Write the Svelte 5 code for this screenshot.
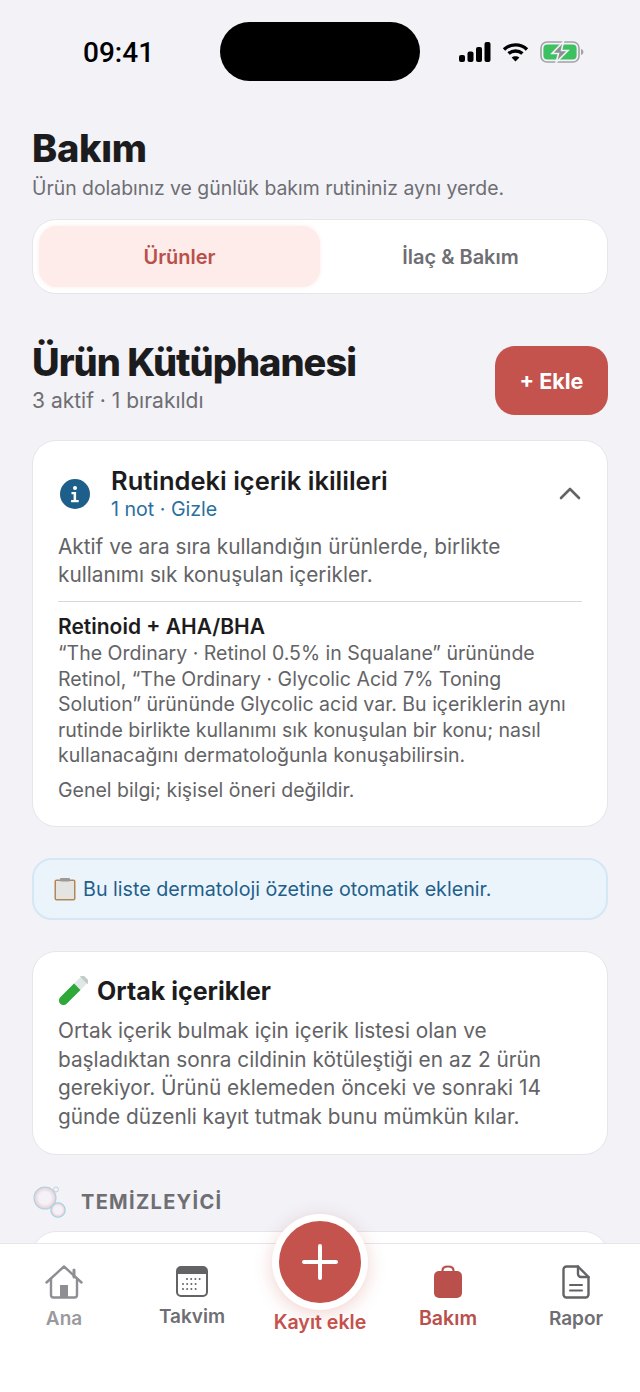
<script>
  const navItems = [
    { id: "home", label: "Ana" },
    { id: "calendar", label: "Takvim" },
    { id: "add", label: "Kayıt ekle" },
    { id: "care", label: "Bakım" },
    { id: "report", label: "Rapor" }
  ];
  const dots = [0, 1, 2, 3];
</script>

<div class="page">
  <div class="status-bar">
    <span class="clock">09:41</span>
    <div class="island"></div>
    <div class="status-icons">
      <svg width="32" height="20" viewBox="0 0 32 20" fill="#000">
        <rect x="0" y="13" width="6" height="7" rx="2" />
        <rect x="8.5" y="9.5" width="6" height="10.5" rx="2" />
        <rect x="17" y="5" width="6" height="15" rx="2" />
        <rect x="25.5" y="0" width="6" height="20" rx="2" />
      </svg>
      <svg width="27" height="20" viewBox="0 0 27 20" fill="none" stroke="#000" stroke-width="3.4">
        <path d="M2 7.4C8.4 1.4 18.6 1.4 25 7.4" />
        <path d="M6.6 11.6C10.4 8.2 16.6 8.2 20.4 11.6" />
        <path d="M13.5 19.6L9.6 15.4C11.6 13.8 15.4 13.8 17.4 15.4Z" fill="#000" stroke="none" />
      </svg>
      <svg width="44" height="22" viewBox="0 0 44 22">
        <rect x="1" y="1" width="38" height="20" rx="6" fill="none" stroke="#a3a3a6" stroke-width="1.6" />
        <rect x="3.4" y="3.4" width="33.2" height="15.2" rx="4" fill="#3cc061" />
        <path d="M41 8v6c1.6-.4 2.4-1.6 2.4-3s-.8-2.6-2.4-3z" fill="#a3a3a6" />
        <path d="M23.5 0.5L12 12.5h6.5L16 21.5 28 9.5h-6.5z" fill="#8e8e93" stroke="#f2f2f7" stroke-width="1.6" />
      </svg>
    </div>
  </div>

  <main class="content">
    <h1>Bakım</h1>
    <p class="subtitle">Ürün dolabınız ve günlük bakım rutininiz aynı yerde.</p>

    <div class="segments">
      <button class="segment active">Ürünler</button>
      <button class="segment">İlaç &amp; Bakım</button>
    </div>

    <div class="library-head">
      <div>
        <h2>Ürün Kütüphanesi</h2>
        <p class="counts">3 aktif · 1 bırakıldı</p>
      </div>
      <button class="add-btn">+ Ekle</button>
    </div>

    <section class="card pairs">
      <div class="pairs-head">
        <svg class="info" width="30" height="30" viewBox="0 0 30 30">
          <circle cx="15" cy="15" r="15" fill="#1d5f8a" />
          <circle cx="15" cy="9" r="2" fill="#fff" />
          <path d="M11.5 13h4.6v8h2.6v2.2h-7.6V21h2.5v-5.8h-2.1z" fill="#fff" />
        </svg>
        <div class="pairs-titles">
          <h3>Rutindeki içerik ikilileri</h3>
          <span class="pairs-toggle">1 not · Gizle</span>
        </div>
        <svg class="chevron" width="22" height="13" viewBox="0 0 22 13" fill="none" stroke="#636366" stroke-width="2.6" stroke-linecap="round" stroke-linejoin="round">
          <path d="M2 11L11 2l9 9" />
        </svg>
      </div>
      <p class="lead">Aktif ve ara sıra kullandığın ürünlerde, birlikte kullanımı sık konuşulan içerikler.</p>
      <hr />
      <h4>Retinoid + AHA/BHA</h4>
      <p class="detail">“The Ordinary · Retinol 0.5% in Squalane” ürününde Retinol, “The Ordinary · Glycolic Acid 7% Toning Solution” ürününde Glycolic acid var. Bu içeriklerin aynı rutinde birlikte kullanımı sık konuşulan bir konu; nasıl kullanacağını dermatoloğunla konuşabilirsin.</p>
      <p class="disclaimer">Genel bilgi; kişisel öneri değildir.</p>
    </section>

    <div class="notice">
      <svg width="22" height="23" viewBox="0 0 22 23">
        <rect x="0.500" y="1.500" width="21" height="21" rx="2" fill="#b5855a" />
        <rect x="2" y="3" width="18" height="18" fill="#e4e4e2" />
        <rect x="6" y="0" width="10" height="3.500" rx="1" fill="#9a9a9c" />
      </svg>
      <span>Bu liste dermatoloji özetine otomatik eklenir.</span>
    </div>

    <section class="card shared">
      <div class="shared-title">
        <svg width="30" height="30" viewBox="0 0 30 30">
          <g transform="rotate(45 15 15)">
            <rect x="10.500" y="-3" width="9" height="36" rx="4.500" fill="#dfe8e6" />
            <path d="M10.500 9h9v19.500a4.500 4.500 0 0 1-9 0z" fill="#2fa83a" />
            <rect x="9.500" y="-3.500" width="11" height="3.500" rx="1.500" fill="#c3cccb" />
          </g>
        </svg>
        <h3>Ortak içerikler</h3>
      </div>
      <p class="lead">Ortak içerik bulmak için içerik listesi olan ve başladıktan sonra cildinin kötüleştiği en az 2 ürün gerekiyor. Ürünü eklemeden önceki ve sonraki 14 günde düzenli kayıt tutmak bunu mümkün kılar.</p>
    </section>

    <div class="category">
      <svg width="34" height="32" viewBox="0 0 34 32" fill="none">
        <defs>
          <radialGradient id="bubble">
            <stop offset="0.55" stop-color="#f4f2f6" />
            <stop offset="1" stop-color="#e9c9d8" />
          </radialGradient>
        </defs>
        <circle cx="13" cy="12" r="11" fill="url(#bubble)" stroke="#a9d6dc" stroke-width="1.1" />
        <circle cx="26" cy="24" r="7.200" fill="url(#bubble)" stroke="#9fd3dc" stroke-width="1.100" />
        <circle cx="24" cy="3.500" r="2.500" stroke="#c5d0d8" stroke-width="1" />
      </svg>
      <span>TEMİZLEYİCİ</span>
    </div>
    <div class="card next-card"></div>
  </main>

  <nav class="tabbar">
    {#each navItems as item}
      <div class="tab tab-{item.id}">
        {#if item.id === "home"}
          <svg width="38" height="34" viewBox="0 0 38 34" fill="none" stroke="#8e8e93" stroke-width="2.400" stroke-linejoin="round" stroke-linecap="round">
            <path d="M1.500 17.500L19 1.500l17.500 16" />
            <path d="M6 14v16a2.500 2.500 0 0 0 2.500 2.500h21A2.500 2.500 0 0 0 32 30V14" />
            <path d="M29 5v7" stroke-width="3" />
            <rect x="15" y="20" width="8" height="13" fill="#8e8e93" stroke="none" />
          </svg>
        {:else if item.id === "calendar"}
          <svg width="32" height="31" viewBox="0 0 32 31">
            <rect x="1" y="1" width="30" height="29" rx="4" fill="#fff" stroke="#636366" stroke-width="2" />
            <path d="M1 8V5a4 4 0 0 1 4-4h22a4 4 0 0 1 4 4v3z" fill="#636366" />
            {#each dots as d}
              <circle cx={11 + d * 4.200} cy="13" r="1" fill="#636366" />
              <circle cx={7 + d * 4.200} cy="18" r="1" fill="#636366" />
              <circle cx={7 + d * 4.200} cy="23" r="1" fill="#636366" />
            {/each}
          </svg>
        {:else if item.id === "add"}
          <div class="fab-ring">
            <div class="fab">
              <svg width="36" height="36" viewBox="0 0 36 36" stroke="#fff" stroke-width="4" stroke-linecap="round">
                <path d="M18 2v32M2 18h32" />
              </svg>
            </div>
          </div>
        {:else if item.id === "care"}
          <svg width="30" height="33" viewBox="0 0 30 33">
            <path d="M9.500 7V5.500C9.500 3 11.500 1.500 15 1.500s5.500 1.500 5.500 4V7" fill="none" stroke="#b9504b" stroke-width="2.200" />
            <rect x="1" y="6" width="28" height="27" rx="5" fill="#b9504b" />
          </svg>
        {:else}
          <svg width="28" height="34" viewBox="0 0 28 34" fill="none" stroke="#636366" stroke-width="2.400" stroke-linejoin="round" stroke-linecap="round">
            <path d="M4.500 1.500H16L26.500 12v17.500a3 3 0 0 1-3 3h-19a3 3 0 0 1-3-3v-25a3 3 0 0 1 3-3z" />
            <path d="M16 1.500V9a3 3 0 0 0 3 3h7.500" />
            <path d="M8 20h12M8 25.500h12" stroke-width="2" />
          </svg>
        {/if}
        <span>{item.label}</span>
      </div>
    {/each}
  </nav>
</div>

<style>
  :global(body) {
    background: #f2f2f7;
  }

  .page {
    position: relative;
    height: 1392px;
    overflow: hidden;
    background: #f2f2f7;
    font-family: Inter, "Noto Sans", sans-serif;
    color: #1c1c1e;
  }

  .status-bar {
    display: flex;
    align-items: flex-start;
    height: 126px;
    padding: 22px 56px 0 83px;
    box-sizing: border-box;
  }

  .clock {
    width: 137px;
    margin-top: 15px;
    font-size: 28px;
    line-height: 32px;
    font-weight: 500;
    font-family: Roboto, Inter, sans-serif;
    color: #000;
  }

  .island {
    width: 200px;
    height: 59px;
    border-radius: 30px;
    background: #000;
  }

  .status-icons {
    display: flex;
    align-items: center;
    gap: 11px;
    margin-left: 39px;
    margin-top: 19px;
  }

  .content {
    padding: 0 32px;
  }

  h1 {
    margin: 0;
    font-size: 38px;
    line-height: 44px;
    font-weight: 800;
    letter-spacing: -0.3px;
  }

  .subtitle {
    margin: 6px 0 0;
    font-size: 19.400px;
    line-height: 24px;
    color: #6e6e73;
  }

  .segments {
    display: flex;
    margin-top: 19px;
    padding: 6px;
    height: 75px;
    box-sizing: border-box;
    background: #fff;
    border: 1px solid #e5e5ea;
    border-radius: 24px;
  }

  .segment {
    flex: 1;
    border: 0;
    background: none;
    border-radius: 18px;
    font: 600 20px Inter, sans-serif;
    color: #6e6e73;
  }

  .segment.active {
    background: #fdecea;
    color: #b9504b;
    box-shadow: 0 0 4px #fdecea;
  }

  .library-head {
    display: flex;
    justify-content: space-between;
    align-items: flex-start;
    margin-top: 45px;
  }

  h2 {
    margin: 0;
    font-size: 38px;
    line-height: 46px;
    font-weight: 800;
    letter-spacing: -1px;
  }

  .counts {
    margin: 3px 0 0;
    font-size: 21px;
    line-height: 26px;
    color: #6e6e73;
  }

  .add-btn {
    width: 113px;
    height: 69px;
    margin-top: 7px;
    border: 0;
    border-radius: 20px;
    background: #c4524d;
    color: #fff;
    font: 700 21.500px Inter, sans-serif;
  }

  .card {
    background: #fff;
    border: 1px solid #e5e5ea;
    border-radius: 24px;
    box-sizing: border-box;
    padding: 0 25px;
  }

  .pairs {
    height: 387px;
    margin-top: 25px;
    padding-top: 25px;
  }

  .pairs-head {
    display: flex;
    align-items: center;
    gap: 21px;
  }

  .info {
    flex: none;
    margin-left: 2px;
  }

  .pairs-titles {
    flex: 1;
  }

  h3 {
    margin: 0;
    font-size: 25px;
    line-height: 30px;
    font-weight: 700;
  }

  .pairs-head h3 {
    font-size: 25.500px;
    font-weight: 600;
  }

  .pairs-toggle {
    display: block;
    font-size: 19.600px;
    line-height: 26px;
    color: #2a6f9e;
  }

  .chevron {
    flex: none;
    margin-right: 1px;
    margin-top: -2px;
  }

  .lead {
    margin: 0;
    font-size: 20.800px;
    line-height: 28px;
    color: #636366;
  }

  .pairs .lead {
    margin-top: 11px;
  }

  hr {
    margin: 12px 0 12px;
    border: 0;
    border-top: 1px solid #d8d8dc;
  }

  h4 {
    margin: 0;
    font-size: 21px;
    line-height: 26px;
    font-weight: 600;
  }

  .detail {
    margin: 1px 0 0;
    font-size: 19.500px;
    line-height: 25.500px;
    color: #636366;
  }

  .disclaimer {
    margin: 9px 0 0;
    font-size: 19.500px;
    line-height: 25px;
    color: #636366;
  }

  .notice {
    display: flex;
    align-items: center;
    gap: 7px;
    height: 62px;
    box-sizing: border-box;
    margin-top: 31px;
    padding-left: 20px;
    background: #ebf4fb;
    border: 2px solid #d4e7f4;
    border-radius: 20px;
    font-size: 19.700px;
    color: #1f5f8b;
  }

  .shared {
    height: 204px;
    margin-top: 31px;
    padding-top: 24px;
  }

  .shared-title {
    display: flex;
    align-items: center;
    gap: 9px;
    margin-bottom: 11px;
  }

  .shared .lead {
    line-height: 28.500px;
  }

  .category {
    display: flex;
    align-items: center;
    gap: 15px;
    margin-top: 31px;
    height: 32px;
    font-size: 20px;
    font-weight: 700;
    letter-spacing: 1.300px;
    color: #6e6e73;
  }

  .next-card {
    height: 80px;
    margin-top: 13px;
  }

  /* bottom navigation sits over the scrolling content */
  .tabbar {
    position: absolute;
    left: 0;
    right: 0;
    bottom: 0;
    height: 149px;
    display: grid;
    grid-template-columns: repeat(5, 1fr);
    background: #fff;
    border-top: 1px solid #e5e5ea;
    box-sizing: border-box;
  }

  .tab {
    position: relative;
    display: flex;
    flex-direction: column;
    align-items: center;
    padding-top: 21px;
    font-size: 19px;
    line-height: 22px;
    font-weight: 600;
    color: #6e6e73;
  }

  .tab span {
    margin-top: 8px;
  }

  .tab-home {
    color: #9a9a9e;
  }

  .tab-home span {
    margin-top: 9px;
  }

  .tab-calendar {
    padding-top: 22px;
  }

  .tab-calendar span {
    margin-top: 9px;
  }

  .tab-care {
    color: #b9504b;
    font-size: 19.600px;
  }

  .tab-care span {
    margin-top: 9px;
  }

  .tab-report span {
    margin-top: 9px;
  }

  .tab-add {
    color: #c4524d;
    font-size: 19.600px;
    white-space: nowrap;
    padding-top: 59px;
  }

  .fab-ring {
    position: absolute;
    top: -30px;
    left: 50%;
    transform: translateX(-50%);
    width: 96px;
    height: 96px;
    border-radius: 50%;
    background: #fff;
    display: flex;
    align-items: center;
    justify-content: center;
    box-shadow: 0 4px 18px rgba(196, 82, 77, 0.25);
  }

  .fab {
    width: 82px;
    height: 82px;
    border-radius: 50%;
    background: #c4524d;
    display: flex;
    align-items: center;
    justify-content: center;
  }
</style>
